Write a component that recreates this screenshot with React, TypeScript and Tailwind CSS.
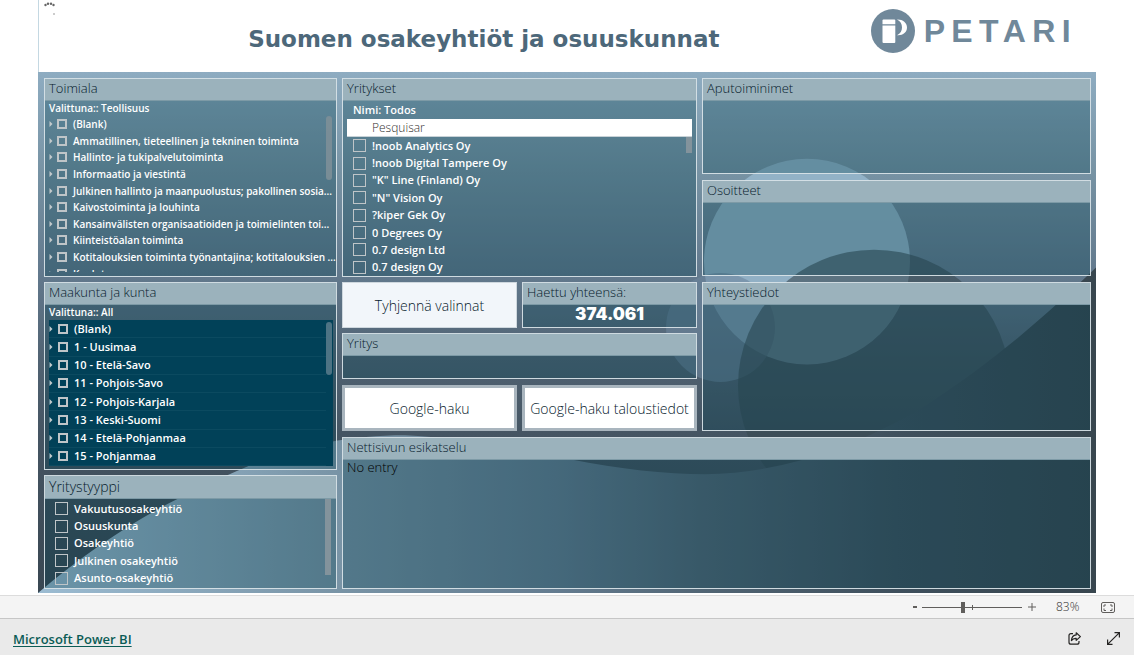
import React, { ReactNode, useState } from 'react';
import clsx from 'clsx';

const industries = [
  '(Blank)',
  'Ammatillinen, tieteellinen ja tekninen toiminta',
  'Hallinto- ja tukipalvelutoiminta',
  'Informaatio ja viestintä',
  'Julkinen hallinto ja maanpuolustus; pakollinen sosia...',
  'Kaivostoiminta ja louhinta',
  'Kansainvälisten organisaatioiden ja toimielinten toi...',
  'Kiinteistöalan toiminta',
  'Kotitalouksien toiminta työnantajina; kotitalouksien ...',
  'Koulutus',
];

const companies = [
  '!noob Analytics Oy',
  '!noob Digital Tampere Oy',
  '"K" Line (Finland) Oy',
  '"N" Vision Oy',
  '?kiper Gek Oy',
  '0 Degrees Oy',
  '0.7 design Ltd',
  '0.7 design Oy',
];

const regions = [
  '(Blank)',
  '1 - Uusimaa',
  '10 - Etelä-Savo',
  '11 - Pohjois-Savo',
  '12 - Pohjois-Karjala',
  '13 - Keski-Suomi',
  '14 - Etelä-Pohjanmaa',
  '15 - Pohjanmaa',
];

const companyTypes = [
  'Vakuutusosakeyhtiö',
  'Osuuskunta',
  'Osakeyhtiö',
  'Julkinen osakeyhtiö',
  'Asunto-osakeyhtiö',
];

interface PanelProps {
  title: string;
  large?: boolean;
  className?: string;
  children?: ReactNode;
}

function Panel({ title, large, className, children }: PanelProps) {
  return (
    <section
      className={clsx(
        'flex min-w-0 flex-col overflow-hidden border border-[#dfe8ec]/90 bg-[#003c4e]/31',
        className,
      )}
    >
      <h2
        className={clsx(
          'shrink-0 border-b border-[#7d9aa6] bg-[#9bb2bc] px-1 font-light text-[#06202c]',
          large ? 'h-[23px] text-sm leading-[22px]' : 'h-[22px] text-[13px] leading-[18px]',
        )}
      >
        {title}
      </h2>
      {children}
    </section>
  );
}

interface CheckRowProps {
  label: string;
  tree?: boolean;
  className?: string;
}

function CheckRow({ label, tree, className }: CheckRowProps) {
  return (
    <li className={clsx('flex min-h-0 min-w-0 items-center', className)}>
      {tree && (
        <button type="button" aria-label={`Laajenna ${label}`} className="mr-1 shrink-0">
          <svg width="4" height="6" viewBox="0 0 4 6" fill="#c3cacc">
            <path d="M0.5 0 L3.5 3 L0.5 6 Z" />
          </svg>
        </button>
      )}
      <label className="flex min-w-0 flex-1 items-center">
        <input
          type="checkbox"
          className={clsx(
            'mr-1.5 shrink-0 appearance-none border-[#bfc5c8] checked:bg-white',
            tree ? 'size-2.5 border-2' : 'size-[13px] border',
          )}
        />
        <span className="whitespace-nowrap">{label}</span>
      </label>
    </li>
  );
}

function Backdrop() {
  return (
    <svg
      className="absolute inset-0 size-full"
      viewBox="38 72 1058 522"
      preserveAspectRatio="none"
      aria-hidden="true"
    >
      <defs>
        <linearGradient id="sky" x1="0" y1="72" x2="0" y2="594" gradientUnits="userSpaceOnUse">
          <stop offset="0" stopColor="#8eacc1" />
          <stop offset="0.19" stopColor="#7793a4" />
          <stop offset="0.38" stopColor="#637a8e" />
          <stop offset="0.55" stopColor="#516373" />
          <stop offset="0.69" stopColor="#455563" />
          <stop offset="1" stopColor="#394752" />
        </linearGradient>
        <linearGradient id="wave" x1="38" y1="0" x2="1096" y2="0" gradientUnits="userSpaceOnUse">
          <stop offset="0" stopColor="#9cbcd2" />
          <stop offset="0.29" stopColor="#7893a5" />
          <stop offset="0.49" stopColor="#647c90" />
          <stop offset="0.63" stopColor="#516574" />
          <stop offset="0.81" stopColor="#3f505d" />
          <stop offset="1" stopColor="#38464f" />
        </linearGradient>
      </defs>
      <rect x="38" y="72" width="1058" height="522" fill="url(#sky)" />
      <circle cx="807" cy="262" r="103" fill="#94b5c9" opacity="0.93" />
      <circle cx="720.5" cy="328" r="54.5" fill="#6d869c" opacity="0.6" />
      <circle cx="874" cy="386" r="136" fill="#384952" opacity="0.6" />
      <path
        d="M38 594 C110 533 170 500 248 467 C300 446 350 436 405 436 C460 438 520 451 570 460 C620 470 665 475 705 475 C780 474 850 450 920 410 C1000 358 1050 312 1096 268 V594 Z"
        fill="url(#wave)"
      />
    </svg>
  );
}

function Logo() {
  return (
    <div className="flex items-center gap-[9px] text-[#70889a]">
      <svg width="44" height="44" viewBox="0 0 44 44" aria-hidden="true">
        <circle cx="22" cy="22" r="22" fill="#70889a" />
        <path d="M12.5 10.5 H23.3 Q24.3 10.5 24.3 11.5 V15.3 H11.5 V11.5 Q11.5 10.5 12.5 10.5 Z" fill="#fff" />
        <path d="M11.5 16.5 H24.3 V33 Q24.3 34 23.3 34 H12.5 Q11.5 34 11.5 33 Z" fill="#fff" />
        <path
          d="M26 10.5 C31.5 10.2 36 13.5 36 18.5 C36 23.5 31.5 26.800 26 26.200 C29.500 24.800 31 21.500 31 18.500 C31 15 29.500 12 26 10.500 Z"
          fill="#fff"
        />
      </svg>
      <span className="font-['Liberation_Sans',sans-serif] text-[32px] leading-10 font-bold tracking-[0.2em]">
        PETARI
      </span>
    </div>
  );
}

function ZoomBar() {
  const [zoom, setZoom] = useState(83);

  return (
    <div className="flex h-[23px] items-center justify-end border-t border-[#dcdcdc] bg-[#f4f4f4] pr-[19px] text-xs text-[#605e5c]">
      <button type="button" aria-label="Loitonna" className="h-0.5 w-1 bg-[#605e5c]" />
      <div className="relative ml-[5px] flex w-[100px] items-center">
        <input
          type="range"
          aria-label="Zoomaus"
          min={10}
          max={188}
          value={zoom}
          onChange={(e) => setZoom(Number(e.target.value))}
          className="h-3 w-full appearance-none bg-[linear-gradient(#605e5c,#605e5c)] bg-[length:100%_1px] bg-center bg-no-repeat [&::-webkit-slider-thumb]:h-[11px] [&::-webkit-slider-thumb]:w-1 [&::-webkit-slider-thumb]:appearance-none [&::-webkit-slider-thumb]:bg-[#605e5c]"
        />
        <span className="pointer-events-none absolute left-1/2 h-[5px] w-px bg-[#605e5c]" />
      </div>
      <button type="button" aria-label="Lähennä" className="ml-1.5">
        <svg width="8" height="8" viewBox="0 0 8 8" stroke="#605e5c">
          <path d="M0 4 H8 M4 0 V8" />
        </svg>
      </button>
      <span className="ml-5 w-[25px] font-light text-[#32302e]">{zoom}%</span>
      <button type="button" aria-label="Sovita sivulle" className="ml-5">
        <svg width="14" height="11" viewBox="0 0 14 11" fill="none" stroke="#605e5c">
          <rect x="0.5" y="0.5" width="13" height="10" rx="1.5" />
          <path d="M3 5 V3 H5 M9 3 H11 V5 M11 6.5 V8.5 H9 M5 8.5 H3 V6.5" />
        </svg>
      </button>
    </div>
  );
}

export default function App() {
  return (
    <div className="flex min-h-screen flex-col bg-white font-['Open_Sans','Noto_Sans',sans-serif]">
      <main className="flex-1 px-[38px] pb-0.5">
        <header className="relative flex h-[72px] items-start border-l border-[#c4d8e2] pr-[19px]">
          <svg className="absolute top-0.5 left-[5px]" width="12" height="14" viewBox="0 0 12 14" fill="#666" aria-label="Ladataan">
            <circle cx="1.5" cy="3" r="1.2" />
            <circle cx="4" cy="1.8" r="1.2" />
            <circle cx="7" cy="1.8" r="1.2" />
            <circle cx="9.5" cy="3" r="1.2" />
            <circle cx="10" cy="12" r="1" fill="#bbb" />
          </svg>
          <h1 className="flex-1 pt-5 pl-[58px] text-center font-['DejaVu_Sans',sans-serif] text-[23px] leading-[38px] font-bold text-[#4d687a]">
            Suomen osakeyhtiöt ja osuuskunnat
          </h1>
          <div className="pt-[9px]">
            <Logo />
          </div>
        </header>

        <div className="relative">
          <Backdrop />
          <div className="relative grid grid-cols-[293fr_749fr] gap-[5px] py-1.5 pr-[5px] pb-1 pl-1.5">
            <div className="flex min-w-0 flex-col gap-[5px]">
              <Panel title="Toimiala" className="h-[199px]">
                <div className="flex min-h-0 flex-1 flex-col overflow-hidden pl-1 text-[10px] font-semibold text-white">
                  <p className="h-[15px] shrink-0 leading-[15px]">Valittuna:: Teollisuus</p>
                  <div className="mb-1 flex min-h-0 flex-1 overflow-hidden">
                    <ul className="grid h-[166px] min-w-0 flex-1 auto-rows-fr leading-4">
                      {industries.map((name) => (
                        <CheckRow key={name} label={name} tree />
                      ))}
                    </ul>
                    <div className="mr-1 -ml-2 h-16 w-1.5 rounded-full bg-[#7d8f98]/90" />
                  </div>
                </div>
              </Panel>

              <Panel title="Maakunta ja kunta" className="h-[188px]">
                <div className="pr-[3px] pl-1 text-[10px] font-semibold text-white">
                  <p className="h-[15px] leading-[15px]">Valittuna:: All</p>
                  <div className="flex bg-[#014158]">
                    <ul className="grid h-[146px] min-w-0 flex-1 auto-rows-fr text-[11px] leading-4">
                      {regions.map((name) => (
                        <CheckRow key={name} label={name} tree className="gap-px border-b border-[#0b4a60]" />
                      ))}
                    </ul>
                    <div className="mt-0.5 mr-px h-[53px] w-1.5 rounded-full bg-[#4d7384]" />
                  </div>
                </div>
              </Panel>

              <Panel title="Yritystyyppi" large className="h-[114px]">
                <div className="flex min-h-0 flex-1 pl-2.5 text-[11px] font-semibold text-white">
                  <ul className="mt-px grid h-[87px] min-w-0 flex-1 auto-rows-fr leading-4">
                    {companyTypes.map((name) => (
                      <CheckRow key={name} label={name} />
                    ))}
                  </ul>
                  <div className="mr-[5px] h-[76px] w-1.5 bg-[#83939c]" />
                </div>
              </Panel>
            </div>

            <div className="flex min-w-0 flex-col gap-1.5">
              <div className="grid grid-cols-[355fr_389fr] gap-[5px]">
                <div className="flex min-w-0 flex-col gap-[5px]">
                  <Panel title="Yritykset" className="h-[199px]">
                    <div className="px-1 text-[11px] font-semibold text-white">
                      <p className="h-[18px] px-1.5 leading-[18px]">Nimi: Todos</p>
                      <input
                        type="search"
                        placeholder="Pesquisar"
                        aria-label="Pesquisar"
                        className="block h-[18px] w-full border-b border-[#c8d2d7] bg-white pl-[25px] text-xs font-light text-[#32302e] placeholder:text-[#32302e]"
                      />
                      <div className="flex">
                        <ul className="grid h-[139px] min-w-0 flex-1 auto-rows-fr pl-1.5 leading-4">
                          {companies.map((name) => (
                            <CheckRow key={name} label={name} />
                          ))}
                        </ul>
                        <div className="h-4 w-1.5 bg-[#83939c]" />
                      </div>
                    </div>
                  </Panel>

                  <div className="grid grid-cols-2 gap-[5px]">
                    <button
                      type="button"
                      className="h-[46px] border border-[#cfd8de] bg-[#f2f6fa] pt-0.5 text-sm font-light text-[#06202c]"
                    >
                      Tyhjennä valinnat
                    </button>
                    <Panel title="Haettu yhteensä:" className="h-[46px]">
                      <output className="text-center font-['Inter',sans-serif] text-[17px] leading-[18px] font-black text-white">
                        374.061
                      </output>
                    </Panel>
                  </div>

                  <Panel title="Yritys" className="h-[46px]" />

                  <div className="grid grid-cols-2 gap-[5px] pt-px text-sm font-light text-[#06202c]">
                    <button type="button" className="h-[46px] border-[3px] border-[#a9b5be] bg-white pt-0.5 whitespace-nowrap">
                      Google-haku
                    </button>
                    <button type="button" className="h-[46px] border-[3px] border-[#a9b5be] bg-white pt-0.5 whitespace-nowrap">
                      Google-haku taloustiedot
                    </button>
                  </div>
                </div>

                <div className="flex min-w-0 flex-col gap-1.5">
                  <Panel title="Aputoiminimet" className="h-24" />
                  <Panel title="Osoitteet" className="h-24" />
                  <Panel title="Yhteystiedot" className="flex-1" />
                </div>
              </div>

              <Panel title="Nettisivun esikatselu" className="flex-1">
                <p className="px-1 text-[13px] leading-[14px] font-light text-black">No entry</p>
              </Panel>
            </div>
          </div>
        </div>
      </main>

      <footer>
        <ZoomBar />
        <div className="flex h-[37px] items-center border-t border-[#c6c6c6] bg-[#eaeaea] pt-0.5 pr-3.5 pl-[13px]">
          <div className="flex-1">
            <a
              href="https://powerbi.microsoft.com"
              className="text-[13px] font-semibold text-[#0b5c56] underline underline-offset-2"
            >
              Microsoft Power BI
            </a>
          </div>
          <button type="button" aria-label="Jaa">
            <svg width="13" height="13" viewBox="0 0 13 13" fill="none" stroke="#252423" strokeWidth="1.2">
              <path d="M5 1.600 H3 Q1 1.600 1 3.600 V10.200 Q1 12.200 3 12.200 H9 Q11 12.200 11 10.200 V9" />
              <path
                d="M8.200 0.800 L12.400 4.600 L8.200 8.400 V6.300 Q5 6.100 3.400 8.600 Q3.800 3.300 8.200 2.900 Z"
                strokeLinejoin="round"
              />
            </svg>
          </button>
          <button type="button" aria-label="Koko näyttö" className="ml-[26px]">
            <svg width="13" height="13" viewBox="0 0 13 13" fill="none" stroke="#252423" strokeWidth="1.2">
              <path d="M0.800 12.200 L12.200 0.800 M7.500 0.600 H12.400 V5.500 M0.600 7.500 V12.400 H5.500" />
            </svg>
          </button>
        </div>
      </footer>
    </div>
  );
}
